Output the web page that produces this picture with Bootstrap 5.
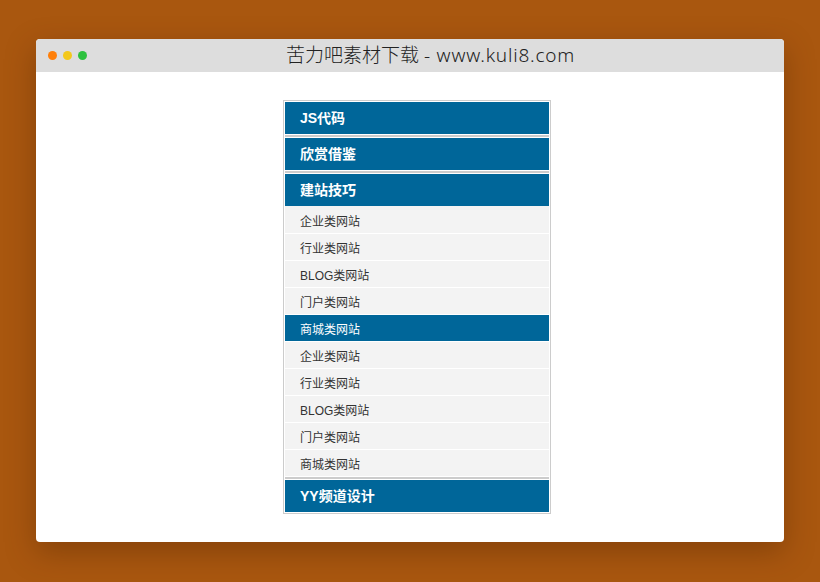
<!DOCTYPE html>
<html lang="zh">
<head>
<meta charset="utf-8">
<title>Menu</title>
<link rel="stylesheet" href="https://cdn.jsdelivr.net/npm/bootstrap@5.3.0/dist/css/bootstrap.min.css">
<style>
html,body{height:100%}
body{background:#a9570f;font-family:"Liberation Sans","Noto Sans CJK SC",sans-serif;overflow:hidden}
.stage{padding:39px 36px 40px}
.win{height:503px;background:#fff;border-radius:4px;box-shadow:0 10px 30px rgba(70,30,0,.35)}
.win-bar{height:33px;background:#ddd;border-radius:4px 4px 0 0;padding-left:12px}
.dot{width:9px;height:9px;border-radius:50%;margin-right:6px}
.dot-o{background:#ff7f09}.dot-y{background:#f3c81b}.dot-g{background:#2dc13e}
.win-title{margin-left:193px;line-height:33px;font-size:19px;color:#222;font-family:"Noto Sans","Noto Sans CJK SC",sans-serif;font-weight:300;white-space:nowrap}
.win-latin{letter-spacing:.8px}
.win-body{padding:28px 0 0 247px}
.acc{width:268px;border:1px solid #ccc;background:#fff;padding:1px}
.acc-sec{padding-bottom:1px;border-bottom:2px solid #ccc;margin-bottom:1px}
.acc-sec.open{padding-bottom:0}
.acc-sec.end{padding:0;border:0;margin:0}
.acc-head{display:block;height:32px;line-height:32px;background:#069;color:#fff;font-weight:700;font-size:14px;padding-left:15px;text-decoration:none}
.acc-head:hover{color:#fff}
.acc-list{margin:0;padding:1px 0 0;list-style:none;background:#f3f3f3}
.acc-item{display:block;height:27px;line-height:26px;padding-top:2px;font-size:12px;color:#333;background:#f3f3f3;border-bottom:1px solid #fff;padding-left:15px;text-decoration:none}
.acc-item.on{background:#069;color:#fff}
</style>
</head>
<body>
<div class="stage">
<div class="win d-flex flex-column">
  <div class="win-bar d-flex align-items-center flex-shrink-0">
    <span class="dot dot-o"></span><span class="dot dot-y"></span><span class="dot dot-g"></span>
    <div class="win-title">苦力吧素材下载 <span class="win-latin">- www.kuli8.com</span></div>
  </div>
  <div class="win-body">
    <div class="acc">
      <div class="acc-sec"><a class="acc-head" href="#">JS代码</a></div>
      <div class="acc-sec"><a class="acc-head" href="#">欣赏借鉴</a></div>
      <div class="acc-sec open">
      <a class="acc-head" href="#">建站技巧</a>
      <ul class="acc-list">
        <li><a class="acc-item" href="#">企业类网站</a></li>
        <li><a class="acc-item" href="#">行业类网站</a></li>
        <li><a class="acc-item" href="#">BLOG类网站</a></li>
        <li><a class="acc-item" href="#">门户类网站</a></li>
        <li><a class="acc-item on" href="#">商城类网站</a></li>
        <li><a class="acc-item" href="#">企业类网站</a></li>
        <li><a class="acc-item" href="#">行业类网站</a></li>
        <li><a class="acc-item" href="#">BLOG类网站</a></li>
        <li><a class="acc-item" href="#">门户类网站</a></li>
        <li><a class="acc-item" href="#">商城类网站</a></li>
      </ul>
      </div>
      <div class="acc-sec end"><a class="acc-head" href="#">YY频道设计</a></div>
    </div>
  </div>
</div>
</div>
<script src="https://cdn.jsdelivr.net/npm/bootstrap@5.3.0/dist/js/bootstrap.bundle.min.js"></script>
</body>
</html>
